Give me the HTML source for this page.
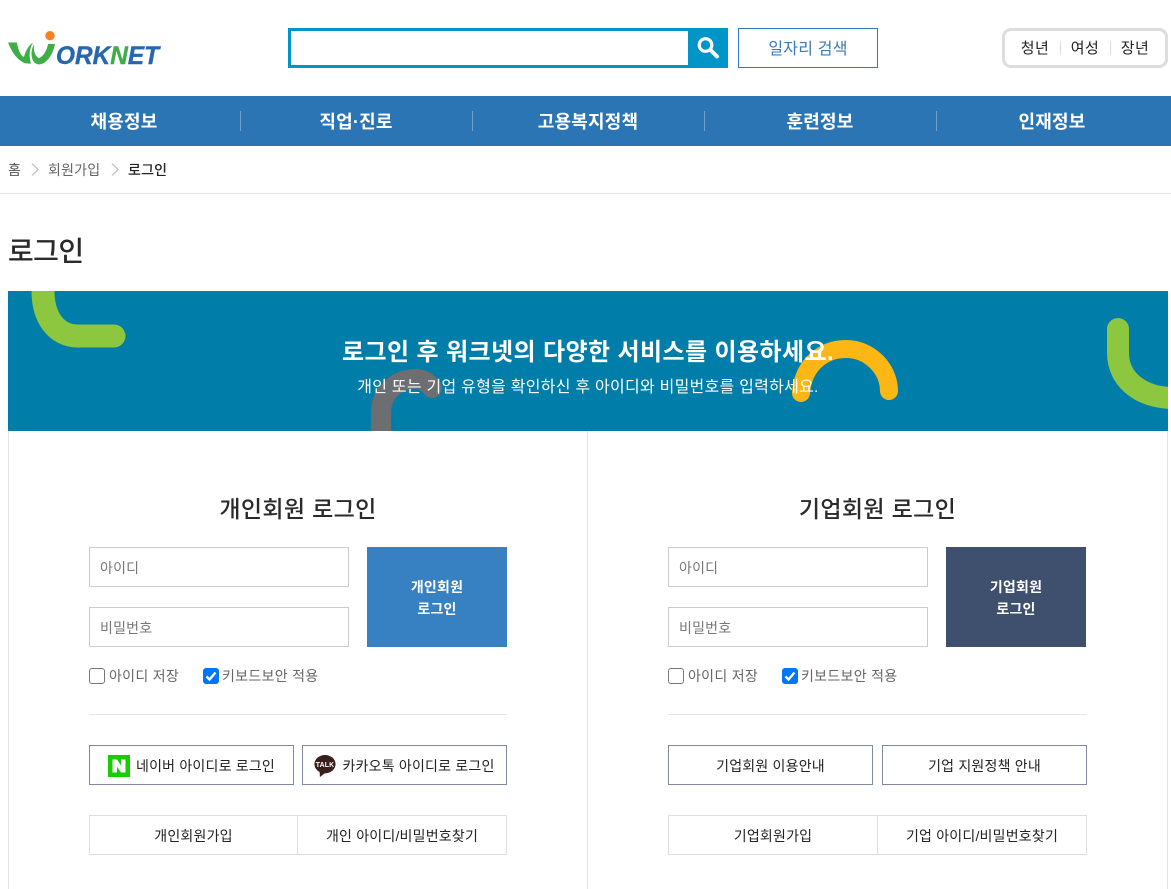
<!DOCTYPE html>
<html lang="ko"><head><meta charset="utf-8"><title>로그인</title>
<style>
html,body{margin:0;padding:0;background:#fff}
body{width:1171px;height:889px;position:relative;overflow:hidden;font-family:"Liberation Sans","Noto Sans CJK KR",sans-serif;color:#222}
.a{position:absolute;box-sizing:border-box}
.t{position:absolute;white-space:nowrap;text-align:center}
.c{display:flex;align-items:center;justify-content:center;white-space:nowrap}
.nav{top:97px;height:50px;width:232px;color:#fff;font-size:18px;font-weight:700;line-height:50px;text-align:center;position:absolute;letter-spacing:.2px}
.sep{position:absolute;top:111px;width:1px;height:20px;background:#6f9fcb}
.inp{position:absolute;width:260px;height:40px;border:1px solid #ccc;box-sizing:border-box;font-size:14px;color:#777;line-height:40px;padding-left:10px;background:#fff;letter-spacing:.2px}
.btn{position:absolute;width:140px;height:100px;color:#fff;font-size:14px;font-weight:700;line-height:22px;text-align:center;padding-top:29px;box-sizing:border-box;letter-spacing:.2px}
.cb{position:absolute;width:16px;height:16px;box-sizing:border-box;border:1px solid #767676;border-radius:3px;background:#fff}
.cb.on{background:#0075ff;border-color:#0075ff}
.lb{position:absolute;font-size:14px;color:#666;line-height:20px;white-space:nowrap;letter-spacing:.3px}
.ob{position:absolute;height:40px;border:1px solid #7f8a9c;box-sizing:border-box;font-size:14px;color:#222;display:flex;align-items:center;justify-content:center;white-space:nowrap;background:#fff;letter-spacing:.2px;padding-top:1px}
.lk{position:absolute;height:40px;border:1px solid #ddd;box-sizing:border-box;font-size:14px;color:#222;display:flex;align-items:center;justify-content:center;white-space:nowrap;background:#fff;letter-spacing:.2px;padding-top:1px}
h2{position:absolute;margin:0;font-size:23px;font-weight:500;line-height:30px;text-align:center;white-space:nowrap;color:#2a2a2a;letter-spacing:.35px}
</style></head><body>

<!-- logo -->
<svg class="a" style="left:7px;top:30px" width="156" height="38" viewBox="0 0 156 38">
<circle cx="43" cy="5.7" r="4.7" fill="#f58220"/>
<path d="M1 12.5 L10 12.5 C11 20 14 26 17 27 C18 22 21 16 26 12.5 C22 19 22 27 24 33.5 C14 35 6 25 1 12.5Z" fill="#3fae49"/>
<path d="M27 14 C26 22 29 27 32 28 C36 27 40 20 41 14 L48 14 C46 24 40 34 32 34.5 C25 34 22 24 27 14 Z" fill="#3fae49"/>
<text x="49" y="34" font-family="Liberation Sans" font-weight="700" font-style="italic" font-size="25" textLength="103" lengthAdjust="spacingAndGlyphs" fill="#2767b0" stroke="#2767b0" stroke-width=".4">ORK<tspan fill="#3fae49" stroke="#3fae49">N</tspan>ET</text>
</svg>

<!-- search -->
<div class="a" style="left:288px;top:28px;width:440px;height:40px;border:3px solid #0095c8;background:#fff"></div>
<div class="a" style="left:688px;top:28px;width:40px;height:40px;background:#0095c8"></div>
<svg class="a" style="left:696px;top:36px" width="24" height="24" viewBox="0 0 24 24"><circle cx="9.5" cy="9" r="6.3" fill="none" stroke="#fff" stroke-width="3.2"/><path d="M14.5 14 L21 20.5" stroke="#fff" stroke-width="4" stroke-linecap="round"/></svg>
<div class="a c" style="left:738px;top:28px;width:140px;height:40px;border:1px solid #2e7dbd;color:#3a7ab5;font-size:16px;padding-bottom:2px;letter-spacing:.2px">일자리 검색</div>

<div class="a" style="left:1002px;top:28px;width:166px;height:40px;border:3px solid #ddd;border-radius:9px;background:#fff"></div>
<div class="t" style="left:1015px;top:38px;width:40px;font-size:15px;line-height:22px;color:#222;letter-spacing:.4px">청년</div>
<div class="t" style="left:1065px;top:38px;width:40px;font-size:15px;line-height:22px;color:#222;letter-spacing:.4px">여성</div>
<div class="t" style="left:1115px;top:38px;width:40px;font-size:15px;line-height:22px;color:#222;letter-spacing:.4px">장년</div>
<div class="a" style="left:1060px;top:41px;width:1px;height:14px;background:#ddd"></div>
<div class="a" style="left:1110px;top:41px;width:1px;height:14px;background:#ddd"></div>

<!-- nav -->
<div class="a" style="left:0;top:96px;width:1171px;height:50px;background:#2b75b4"></div>
<div class="nav" style="left:8px">채용정보</div>
<div class="nav" style="left:240px">직업·진로</div>
<div class="nav" style="left:472px">고용복지정책</div>
<div class="nav" style="left:704px">훈련정보</div>
<div class="nav" style="left:936px">인재정보</div>
<div class="sep" style="left:240px"></div><div class="sep" style="left:472px"></div><div class="sep" style="left:704px"></div><div class="sep" style="left:936px"></div>

<!-- breadcrumb -->
<div class="t" style="left:8px;top:160px;font-size:14px;line-height:20px;color:#555">홈</div>
<svg class="a" style="left:30px;top:162px" width="10" height="15" viewBox="0 0 10 15"><path d="M2 1.5 L8 7.5 L2 13.5" fill="none" stroke="#bbb" stroke-width="1.2"/></svg>
<div class="t" style="left:48px;top:160px;font-size:14px;line-height:20px;color:#666;letter-spacing:.2px">회원가입</div>
<svg class="a" style="left:110px;top:162px" width="10" height="15" viewBox="0 0 10 15"><path d="M2 1.5 L8 7.5 L2 13.5" fill="none" stroke="#bbb" stroke-width="1.2"/></svg>
<div class="t" style="left:128px;top:160px;font-size:14px;line-height:20px;color:#222;font-weight:500;letter-spacing:.2px">로그인</div>
<div class="a" style="left:0;top:193px;width:1171px;height:1px;background:#e5e5e5"></div>

<div class="t" style="left:8px;top:232px;font-size:28px;line-height:40px;font-weight:500;color:#2a2a2a;letter-spacing:-.6px">로그인</div>

<!-- banner -->
<div class="a" style="left:8px;top:291px;width:1160px;height:140px;background:#007da8;overflow:hidden">
<svg style="position:absolute;left:0;top:0" width="1160" height="140" viewBox="0 0 1160 140">
<path d="M35 0 C35 26 48 45 70 45 L106 45" fill="none" stroke="#8dc63f" stroke-width="23" stroke-linecap="round"/>
<path d="M373 150 L373 122 C373 100 390 88 408 88 C416 88 420 92 424 97" fill="none" stroke="#6d6e71" stroke-width="20" stroke-linecap="round"/>
<path d="M793 102 C795 74 815 58 838 58 C862 58 881 78 881 100" fill="none" stroke="#fdb714" stroke-width="18" stroke-linecap="round"/>
<path d="M1110 38 L1110 62 C1110 90 1135 107 1165 107" fill="none" stroke="#8dc63f" stroke-width="22" stroke-linecap="round"/>
</svg>
</div>
<div class="t" style="left:8px;top:337px;width:1160px;font-size:24px;line-height:32px;font-weight:700;color:#fff;letter-spacing:.4px">로그인 후 워크넷의 다양한 서비스를 이용하세요.</div>
<div class="t" style="left:8px;top:376px;width:1160px;font-size:16px;line-height:24px;color:#fff;letter-spacing:.25px">개인 또는 기업 유형을 확인하신 후 아이디와 비밀번호를 입력하세요.</div>

<!-- panel lines -->
<div class="a" style="left:8px;top:431px;width:1px;height:458px;background:#e3e3e3"></div>
<div class="a" style="left:587px;top:431px;width:1px;height:458px;background:#e3e3e3"></div>
<div class="a" style="left:1167px;top:431px;width:1px;height:458px;background:#e3e3e3"></div>

<!-- left -->
<h2 style="left:9px;top:494px;width:578px">개인회원 로그인</h2>
<div class="inp" style="left:89px;top:547px">아이디</div>
<div class="inp" style="left:89px;top:607px">비밀번호</div>
<div class="btn" style="left:367px;top:547px;background:#3781c2">개인회원<br>로그인</div>
<div class="cb" style="left:89px;top:668px"></div>
<div class="lb" style="left:109px;top:666px">아이디 저장</div>
<div class="cb on" style="left:203px;top:668px"><svg width="14" height="14" viewBox="0 0 14 14" style="display:block"><path d="M2.5 7.5 L5.5 10.5 L11.5 3.5" fill="none" stroke="#fff" stroke-width="2.4"/></svg></div>
<div class="lb" style="left:222px;top:666px">키보드보안 적용</div>
<div class="a" style="left:89px;top:714px;width:418px;height:1px;background:#e5e5e5"></div>
<div class="ob" style="left:89px;top:745px;width:205px"><svg width="22" height="22" viewBox="0 0 22 22" style="margin-right:6px;flex:none"><rect width="22" height="22" fill="#19ce00"/><path d="M4.5 4.5 H9 L13 10.5 V4.5 H17.5 V17.5 H13 L9 11.5 V17.5 H4.5Z" fill="#fff"/></svg>네이버 아이디로 로그인</div>
<div class="ob" style="left:302px;top:745px;width:205px"><svg width="22" height="24" viewBox="0 0 24 26" style="margin-right:6px;flex:none"><ellipse cx="12" cy="11" rx="11.5" ry="10" fill="#3a1d1d"/><path d="M6 18 L6.5 25 L13 20Z" fill="#3a1d1d"/><text x="12" y="14" font-size="7.5" font-weight="700" font-family="Liberation Sans" fill="#fff" text-anchor="middle">TALK</text></svg>카카오톡 아이디로 로그인</div>
<div class="lk" style="left:89px;top:815px;width:209px">개인회원가입</div>
<div class="lk" style="left:297px;top:815px;width:210px">개인 아이디/비밀번호찾기</div>

<!-- right -->
<h2 style="left:588px;top:494px;width:579px">기업회원 로그인</h2>
<div class="inp" style="left:668px;top:547px">아이디</div>
<div class="inp" style="left:668px;top:607px">비밀번호</div>
<div class="btn" style="left:946px;top:547px;background:#3f4f6e">기업회원<br>로그인</div>
<div class="cb" style="left:668px;top:668px"></div>
<div class="lb" style="left:688px;top:666px">아이디 저장</div>
<div class="cb on" style="left:782px;top:668px"><svg width="14" height="14" viewBox="0 0 14 14" style="display:block"><path d="M2.5 7.5 L5.5 10.5 L11.5 3.5" fill="none" stroke="#fff" stroke-width="2.4"/></svg></div>
<div class="lb" style="left:801px;top:666px">키보드보안 적용</div>
<div class="a" style="left:668px;top:714px;width:419px;height:1px;background:#e5e5e5"></div>
<div class="ob" style="left:668px;top:745px;width:205px">기업회원 이용안내</div>
<div class="ob" style="left:882px;top:745px;width:205px">기업 지원정책 안내</div>
<div class="lk" style="left:668px;top:815px;width:210px">기업회원가입</div>
<div class="lk" style="left:877px;top:815px;width:210px">기업 아이디/비밀번호찾기</div>

</body></html>
